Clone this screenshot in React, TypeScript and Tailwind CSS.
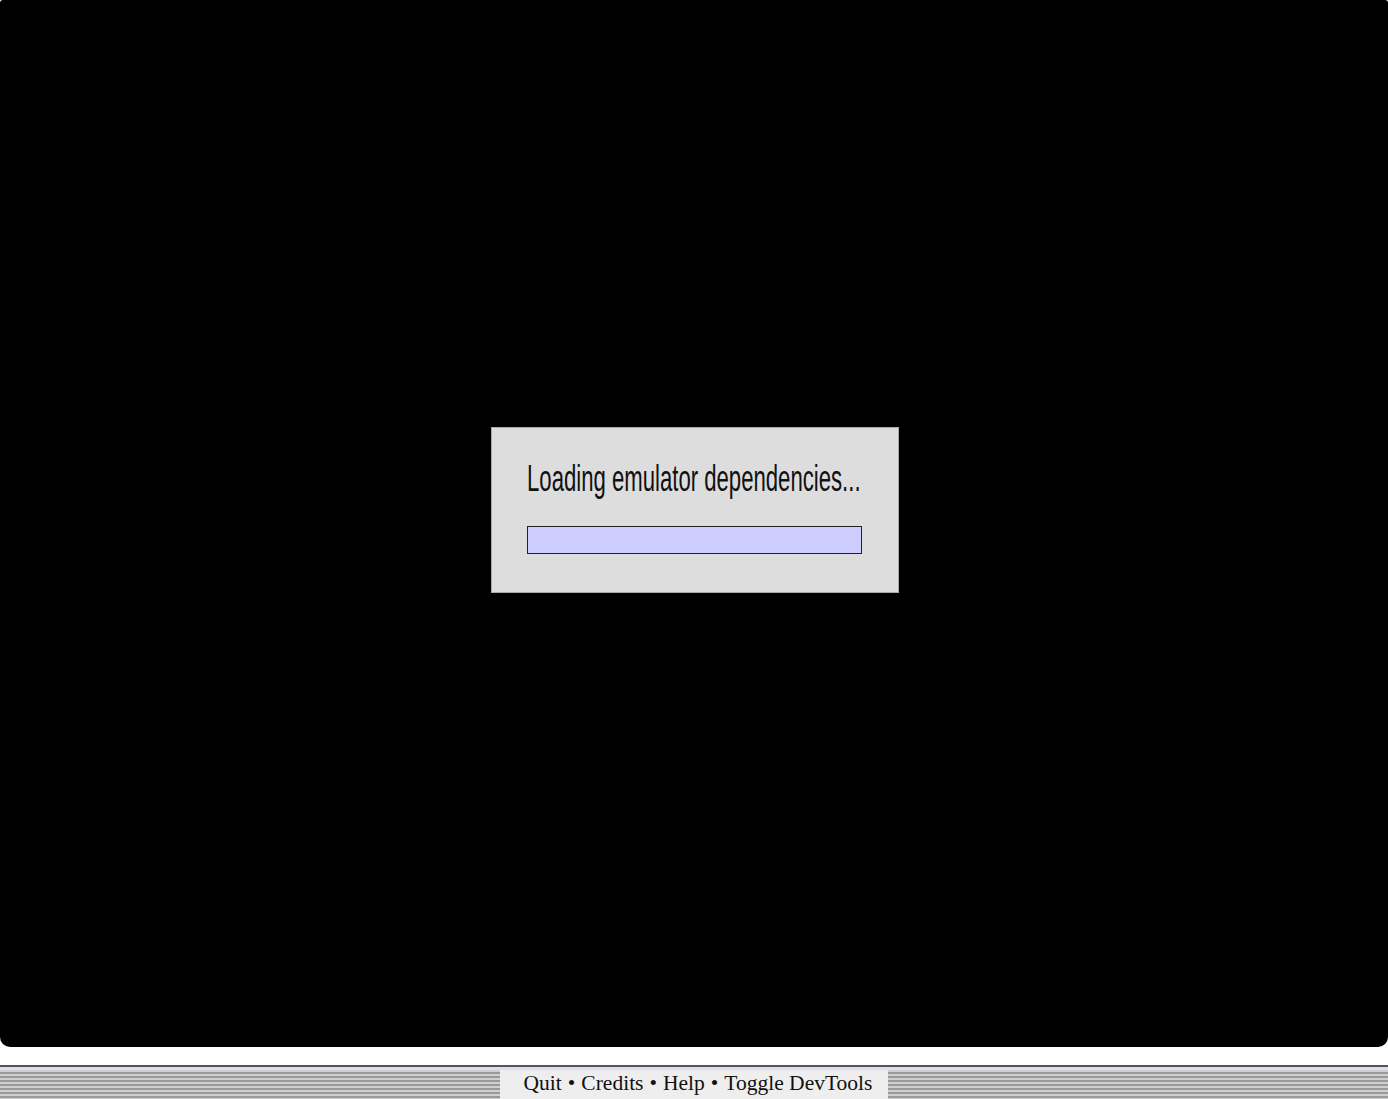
import React from 'react';

const links = ['Quit', 'Credits', 'Help', 'Toggle DevTools'];

export default function App() {
  return (
    <div className="flex h-[1099px] w-full flex-col overflow-hidden bg-white">
      {/* emulator screen */}
      <div className="flex h-[1047px] w-full items-center justify-center rounded-t-[3px] rounded-b-[10px] bg-black">
        <div className="mb-[27px] ml-[2px] flex h-[166px] w-[408px] flex-col items-start border border-[#a9a9a9] bg-[#dddddd] px-[35px] pt-[30px]">
          <div className="h-[42px] w-[335px]">
            <span className="inline-block origin-left scale-x-[0.615] whitespace-nowrap font-['Liberation_Sans',sans-serif] text-[36px] leading-[42px] text-[#111]">
              Loading emulator dependencies...
            </span>
          </div>
          <div className="mt-[26px] h-[28px] w-[335px] border border-[#222] bg-[#ccccff]" />
        </div>
      </div>

      {/* footer bar */}
      <div className="mt-[18px] flex flex-1 flex-col">
        <div className="h-[2px] bg-[#555]" />
        <div className="h-[3px] bg-[#dcdcf2]" />
        <div className="flex flex-1">
          <div className="flex-1 bg-[repeating-linear-gradient(to_bottom,#cfcfcf_0px,#cfcfcf_2px,#999_2px,#999_4px)]" />
          <div className="flex w-[388px] items-center justify-center bg-[#eeeeee] pb-[1px] pl-[8px] font-['Liberation_Serif',serif] text-[21.5px] leading-none text-[#111]">
            {links.map((l, i) => (
              <React.Fragment key={l}>
                {i > 0 && <span className="mx-[6px]">•</span>}
                <span>{l}</span>
              </React.Fragment>
            ))}
          </div>
          <div className="flex-1 bg-[repeating-linear-gradient(to_bottom,#cfcfcf_0px,#cfcfcf_2px,#999_2px,#999_4px)]" />
        </div>
      </div>
    </div>
  );
}
